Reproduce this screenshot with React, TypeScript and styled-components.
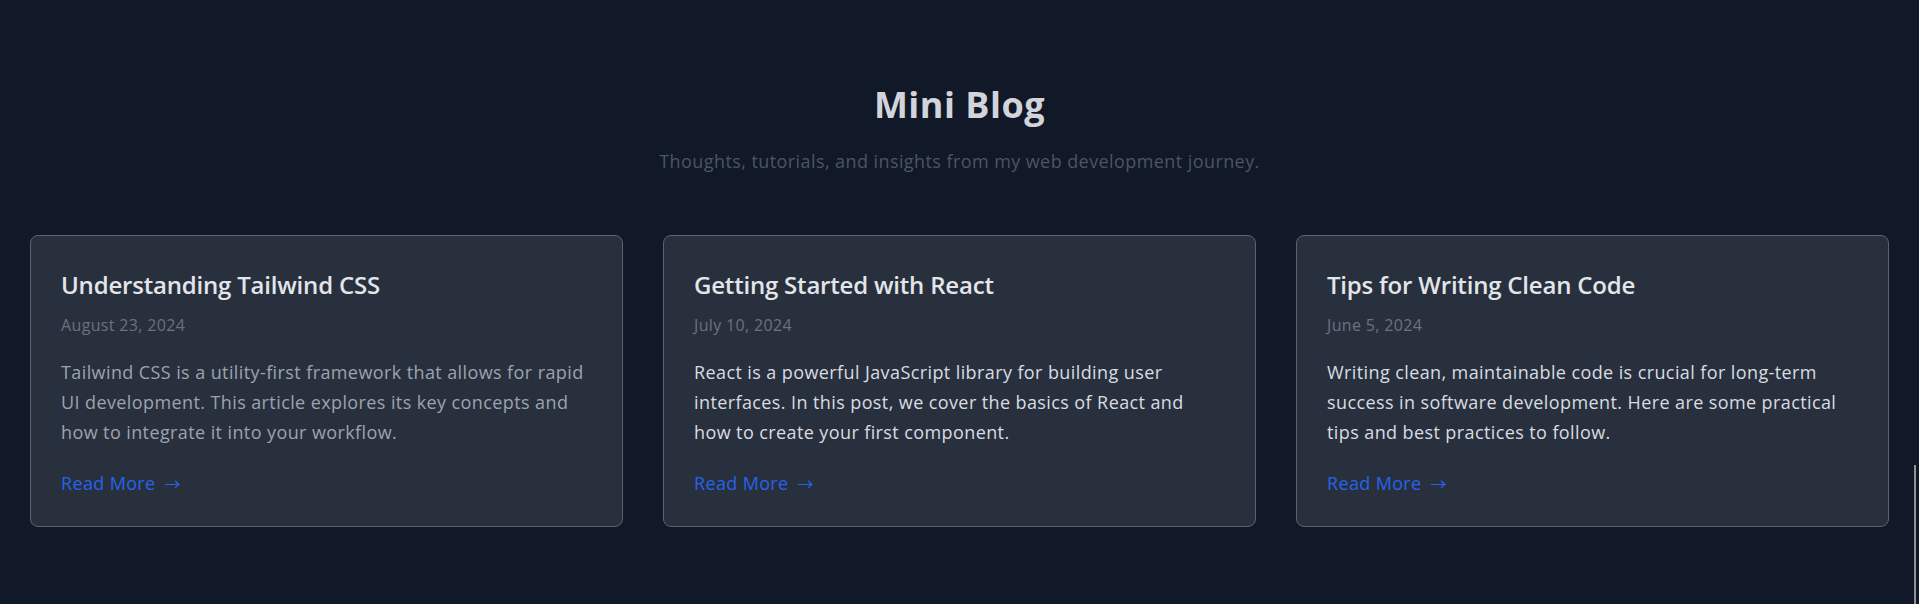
import React from "react";
import styled, { createGlobalStyle } from "styled-components";

const GlobalStyle = createGlobalStyle`
  html, body {
    margin: 0;
    padding: 0;
    background: #111827;
  }
  body {
    font-family: "Open Sans", "Noto Sans", "Liberation Sans", sans-serif;
    -webkit-font-smoothing: antialiased;
  }
  * { box-sizing: border-box; }
`;

const Page = styled.main`
  min-height: 604px;
  background: #111827;
  padding: 85px 30px 60px;
`;

const Header = styled.header`
  display: flex;
  flex-direction: column;
  align-items: center;
`;

const Title = styled.h1`
  margin: 0;
  font-size: 36px;
  line-height: 40px;
  font-weight: 700;
  letter-spacing: 0.5px;
  color: #d1d5db;
`;

const Subtitle = styled.p`
  margin: 22px 0 0;
  font-size: 18px;
  line-height: 28px;
  letter-spacing: 0.42px;
  color: #4b5563;
`;

const Grid = styled.section`
  margin-top: 60px;
  display: grid;
  grid-template-columns: repeat(3, 1fr);
  gap: 40px;
`;

const Card = styled.article`
  background: #29303d;
  border: 1px solid #5b6270;
  border-radius: 8px;
  padding: 33px 30px 29px;
  display: flex;
  flex-direction: column;
`;

const CardTitle = styled.h2`
  margin: 0;
  font-size: 24px;
  line-height: 32px;
  font-weight: 600;
  letter-spacing: -0.2px;
  color: #e2e5ea;
`;

const DateText = styled.time`
  margin-top: 12px;
  font-size: 16px;
  line-height: 24px;
  letter-spacing: 0.35px;
  color: #6b7280;
`;

const Excerpt = styled.p<{ $muted?: boolean }>`
  margin: 20px 0 0;
  font-size: 18px;
  line-height: 30px;
  letter-spacing: 0.4px;
  color: ${(p) => (p.$muted ? "#9ca3af" : "#d8dce2")};
`;

const ReadMore = styled.a`
  margin-top: 22px;
  font-size: 18px;
  line-height: 28px;
  letter-spacing: 0.35px;
  color: #2563eb;
  text-decoration: none;
  align-self: flex-start;
`;

const Arrow = styled.span`
  font-family: "Noto Sans CJK JP", "Noto Sans CJK SC", sans-serif;
  font-size: 16px;
  font-weight: 400;
  letter-spacing: 0;
  margin-left: 4px;
`;

const ScrollThumb = styled.div`
  position: fixed;
  left: 1914px;
  top: 465px;
  width: 2px;
  height: 139px;
  background: #8e9299;
`;

const posts = [
  {
    title: "Understanding Tailwind CSS",
    date: "August 23, 2024",
    excerpt:
      "Tailwind CSS is a utility-first framework that allows for rapid UI development. This article explores its key concepts and how to integrate it into your workflow.",
    muted: true,
  },
  {
    title: "Getting Started with React",
    date: "July 10, 2024",
    excerpt:
      "React is a powerful JavaScript library for building user interfaces. In this post, we cover the basics of React and how to create your first component.",
    muted: false,
  },
  {
    title: "Tips for Writing Clean Code",
    date: "June 5, 2024",
    excerpt:
      "Writing clean, maintainable code is crucial for long-term success in software development. Here are some practical tips and best practices to follow.",
    muted: false,
  },
];

export default function App() {
  return (
    <>
      <GlobalStyle />
      <Page>
        <Header>
          <Title>Mini Blog</Title>
          <Subtitle>Thoughts, tutorials, and insights from my web development journey.</Subtitle>
        </Header>
        <Grid>
          {posts.map((p) => (
            <Card key={p.title}>
              <CardTitle>{p.title}</CardTitle>
              <DateText>{p.date}</DateText>
              <Excerpt $muted={p.muted}>{p.excerpt}</Excerpt>
              <ReadMore href="#">
                Read More <Arrow>→</Arrow>
              </ReadMore>
            </Card>
          ))}
        </Grid>
      </Page>
      <ScrollThumb />
    </>
  );
}
